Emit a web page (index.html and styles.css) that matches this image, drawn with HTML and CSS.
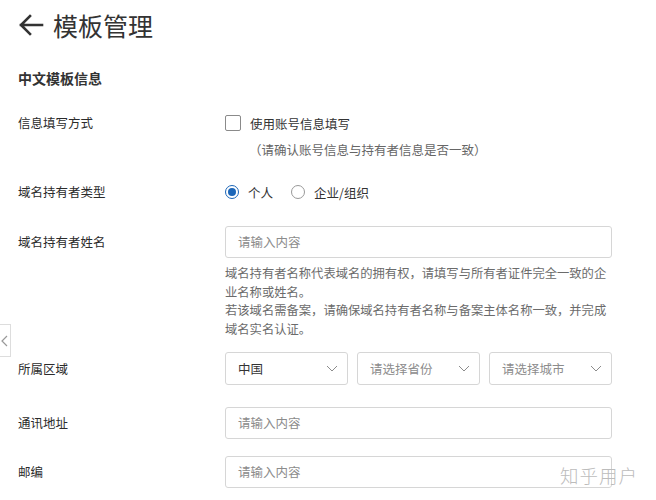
FILE: index.html
```
<!DOCTYPE html>
<html lang="zh-CN">
<head>
    <meta charset="UTF-8">
    <meta name="viewport" content="width=device-width, initial-scale=1.0">
    <title>模板管理</title>
    <link rel="stylesheet" href="styles.css">
</head>
<body>
    <div class="page">
        <div class="header">
            <svg class="back" width="26" height="22" viewBox="0 0 26 22">
                <path d="M24 11H3M12 2L3 11l9 9" fill="none" stroke="#333" stroke-width="2.6" stroke-linecap="square"/>
            </svg>
            <h1>模板管理</h1>
        </div>

        <h2 class="section-title">中文模板信息</h2>

        <div class="row">
            <div class="label short">信息填写方式</div>
            <div class="control">
                <label class="check">
                    <span class="box"></span>
                    <span>使用账号信息填写</span>
                </label>
                <div class="hint">（请确认账号信息与持有者信息是否一致）</div>
            </div>
        </div>

        <div class="row row-type">
            <div class="label short">域名持有者类型</div>
            <div class="control radios">
                <label class="radio"><span class="dot checked"></span>个人</label>
                <label class="radio"><span class="dot"></span>企业/组织</label>
            </div>
        </div>

        <div class="row row-name">
            <div class="label">域名持有者姓名</div>
            <div class="control">
                <div class="input placeholder">请输入内容</div>
                <p class="help">域名持有者名称代表域名的拥有权，请填写与所有者证件完全一致的企业名称或姓名。<br>若该域名需备案，请确保域名持有者名称与备案主体名称一致，并完成域名实名认证。</p>
            </div>
        </div>

        <div class="row row-region">
            <div class="label tall">所属区域</div>
            <div class="control selects">
                <div class="select"><span>中国</span><svg width="12" height="7" viewBox="0 0 12 7"><path d="M1 1l5 5 5-5" fill="none" stroke="#8c8c8c" stroke-width="1"/></svg></div>
                <div class="select placeholder"><span>请选择省份</span><svg width="12" height="7" viewBox="0 0 12 7"><path d="M1 1l5 5 5-5" fill="none" stroke="#8c8c8c" stroke-width="1"/></svg></div>
                <div class="select placeholder"><span>请选择城市</span><svg width="12" height="7" viewBox="0 0 12 7"><path d="M1 1l5 5 5-5" fill="none" stroke="#8c8c8c" stroke-width="1"/></svg></div>
            </div>
        </div>

        <div class="row row-address">
            <div class="label">通讯地址</div>
            <div class="control">
                <div class="input placeholder">请输入内容</div>
            </div>
        </div>

        <div class="row row-zip">
            <div class="label">邮编</div>
            <div class="control">
                <div class="input placeholder">请输入内容</div>
            </div>
        </div>
    </div>

    <div class="side-tab">
        <svg width="8" height="12" viewBox="0 0 8 12"><path d="M7 1L2 6l5 5" fill="none" stroke="#999" stroke-width="1.2"/></svg>
    </div>

    <div class="watermark">知乎用户</div>
</body>
</html>
```

FILE: styles.css
```
body {
    margin: 0;
    background-color: #ffffff;
    font-family: "Noto Sans CJK SC", "Noto Sans", sans-serif;
    color: #333333;
    width: 656px;
    height: 500px;
    overflow: hidden;
    position: relative;
}

.page {
    padding: 10px 0 0 18px;
}

.header {
    display: flex;
    align-items: center;
    height: 30px;
}

.back {
    margin-right: 9px;
}

h1 {
    margin: 0;
    font-size: 25px;
    font-weight: 400;
    line-height: 30px;
    color: #333333;
}

.section-title {
    margin: 28px 0 0 0;
    font-size: 14px;
    font-weight: 700;
    line-height: 20px;
    color: #333333;
}

.row {
    display: flex;
    align-items: flex-start;
    margin-top: 26px;
}

.label {
    width: 207px;
    flex-shrink: 0;
    font-size: 12.5px;
    line-height: 32px;
    color: #2b2b2b;
}

.label.short {
    line-height: 18px;
}

.label.tall {
    line-height: 33px;
}

.control {
    width: 387px;
}

/* checkbox */
.check {
    display: flex;
    align-items: center;
    height: 18px;
    font-size: 12.5px;
}

.box {
    width: 14px;
    height: 14px;
    border: 1px solid #8a8a8a;
    border-radius: 2px;
    margin-right: 9px;
}

.hint {
    margin: 9px 0 0 24px;
    font-size: 12.5px;
    line-height: 18px;
    color: #666666;
}

/* radios */
.row-type {
    margin-top: 24px;
}

.radios {
    display: flex;
    height: 18px;
    align-items: center;
}

.radio {
    display: flex;
    align-items: center;
    font-size: 12.5px;
    margin-right: 18px;
}

.dot {
    width: 12px;
    height: 12px;
    border: 1px solid #999999;
    border-radius: 50%;
    margin-right: 9px;
    position: relative;
}

.dot.checked {
    border-color: #1c66b8;
}

.dot.checked::after {
    content: "";
    position: absolute;
    left: 2px;
    top: 2px;
    width: 8px;
    height: 8px;
    border-radius: 50%;
    background-color: #1c66b8;
}

/* inputs */
.row-name {
    margin-top: 25px;
}

.input {
    box-sizing: border-box;
    height: 32px;
    border: 1px solid #d6d6d6;
    border-radius: 3px;
    padding: 0 12px;
    font-size: 12.5px;
    line-height: 30px;
}

.placeholder {
    color: #8c8c8c;
}

.help {
    margin: 6px 0 0 0;
    font-size: 12.3px;
    line-height: 18.5px;
    color: #6b6b6b;
}

/* selects */
.row-region {
    margin-top: 14px;
}

.selects {
    display: flex;
    gap: 9px;
}

.select {
    box-sizing: border-box;
    flex: 1;
    height: 33px;
    border: 1px solid #d6d6d6;
    border-radius: 3px;
    padding: 0 9px 0 12px;
    display: flex;
    align-items: center;
    justify-content: space-between;
    font-size: 12.5px;
    color: #333333;
}

.select.placeholder {
    color: #8c8c8c;
}

.row-address {
    margin-top: 22px;
}

.row-zip {
    margin-top: 17px;
}

/* left edge tab */
.side-tab {
    position: absolute;
    left: -1px;
    top: 324px;
    width: 10px;
    height: 31px;
    border: 1px solid #dddddd;
    background-color: #ffffff;
    display: flex;
    align-items: center;
    justify-content: flex-start;
}

.watermark {
    position: absolute;
    left: 560px;
    top: 462px;
    font-size: 18.5px;
    letter-spacing: 1px;
    color: #bcbcbc;
    font-weight: 300;
}
```
